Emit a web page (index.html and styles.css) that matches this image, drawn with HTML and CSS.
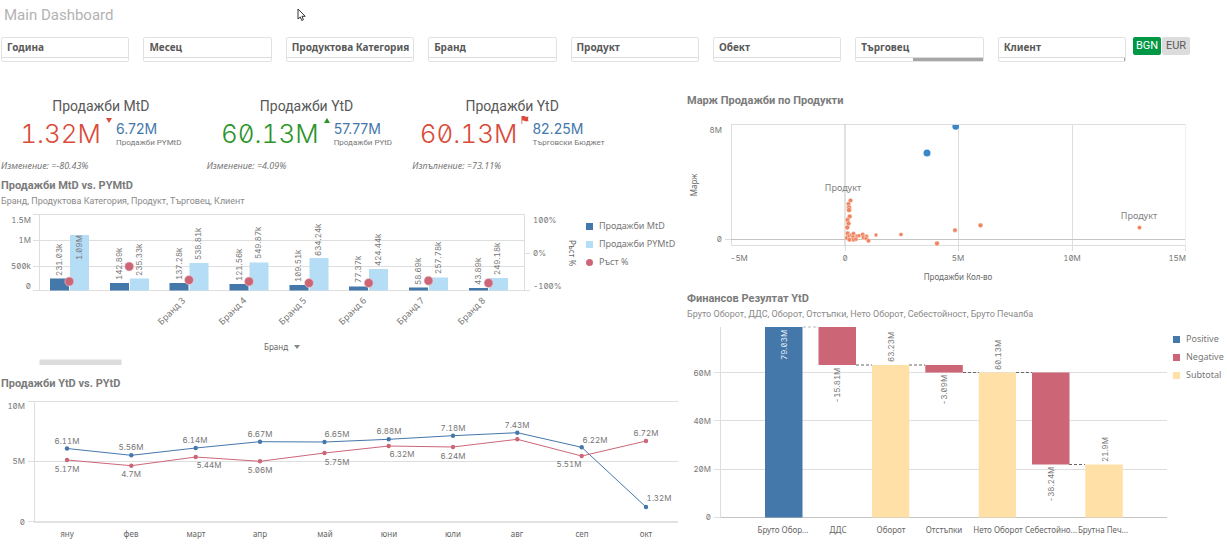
FILE: index.html
```html
<!DOCTYPE html>
<html lang="bg">
<head>
<meta charset="utf-8">
<title>Main Dashboard</title>
<link rel="stylesheet" href="styles.css">
</head>
<body>
<header class="topbar">
  <h1 class="page-title">Main Dashboard</h1>
  <svg class="pointer" width="10" height="14" viewBox="0 0 10 14" aria-hidden="true"><path d="M1 1v10l2.300-2 1.500 3.500 1.600-.8L5 8.300h3.200z" fill="#fff" stroke="#333" stroke-width="1"/></svg>
</header>

<nav class="filters">
  <button class="filter" type="button"><span class="filter-name">Година</span><span class="filter-bar"></span></button>
  <button class="filter" type="button"><span class="filter-name">Месец</span><span class="filter-bar"></span></button>
  <button class="filter" type="button"><span class="filter-name">Продуктова Категория</span><span class="filter-bar"></span></button>
  <button class="filter" type="button"><span class="filter-name">Бранд</span><span class="filter-bar"></span></button>
  <button class="filter" type="button"><span class="filter-name">Продукт</span><span class="filter-bar"></span></button>
  <button class="filter" type="button"><span class="filter-name">Обект</span><span class="filter-bar"></span></button>
  <button class="filter" type="button"><span class="filter-name">Търговец</span><span class="filter-bar"><span class="filter-fill" style="width:55%"></span></span></button>
  <button class="filter" type="button"><span class="filter-name">Клиент</span><span class="filter-bar"><span class="filter-fill" style="width:1%"></span></span></button>
  <div class="currency">
    <button class="cur cur-on" type="button">BGN</button>
    <button class="cur" type="button">EUR</button>
  </div>
</nav>

<main class="board">
  <div class="column">
    <section class="kpis">
      <article class="kpi">
        <h2 class="kpi-title">Продажби MtD</h2>
        <div class="kpi-row">
          <span class="kpi-value red">1.32M</span>
          <svg class="kpi-mark" width="8" height="8" viewBox="0 0 8 8"><path d="M1 2h6L4 7z" fill="#d94b3a"/></svg>
          <div class="kpi-side"><span class="kpi-second">6.72M</span><span class="kpi-label">Продажби PYMtD</span></div>
        </div>
        <p class="kpi-note">Изменение: =-80.43%</p>
      </article>
      <article class="kpi">
        <h2 class="kpi-title">Продажби YtD</h2>
        <div class="kpi-row">
          <span class="kpi-value green">60.13M</span>
          <svg class="kpi-mark" width="8" height="8" viewBox="0 0 8 8"><path d="M1 7h6L4 2z" fill="#2b942b"/></svg>
          <div class="kpi-side"><span class="kpi-second">57.77M</span><span class="kpi-label">Продажби PYtD</span></div>
        </div>
        <p class="kpi-note">Изменение: =4.09%</p>
      </article>
      <article class="kpi">
        <h2 class="kpi-title">Продажби YtD</h2>
        <div class="kpi-row">
          <span class="kpi-value red">60.13M</span>
          <svg class="kpi-mark" width="8" height="8" viewBox="0 0 8 8"><path d="M0.500 0h3l1 .7H7.500L7 3l.5 2.300H4L3 4.600H1.200V8H.5z" fill="#d94b3a"/></svg>
          <div class="kpi-side"><span class="kpi-second">82.25M</span><span class="kpi-label">Търговски Бюджет</span></div>
        </div>
        <p class="kpi-note">Изпълнение: =73.11%</p>
      </article>
    </section>

    <section class="panel">
      <h2 class="panel-title">Продажби MtD vs. PYMtD</h2>
      <p class="panel-sub">Бранд, Продуктова Категория, Продукт, Търговец, Клиент</p>
      <div class="with-legend bars-panel">
        <svg class="chart" viewBox="0 208 583 168" role="img" aria-label="Продажби MtD vs. PYMtD">
          <path class="grid" d="M33 214.500H525M33 240.500H525M33 266.500H525M33 290.500H525M39.500 214V291M524.500 214V291M524 253.500h6M524 290.500h6"/>
          <g class="axis end"><text x="31" y="223">1.5M</text><text x="31" y="243">1M</text><text x="31" y="269">500k</text><text x="31" y="289">0</text></g>
          <g class="axis"><text x="533" y="223">100%</text><text x="533" y="256">0%</text><text x="533" y="289">-100%</text></g>
          <g fill="#4477aa">
            <rect x="50" y="278.500" width="19" height="12"/><rect x="110" y="283" width="19" height="7.500"/><rect x="169.500" y="283" width="19" height="7.500"/><rect x="229.500" y="284" width="19" height="6.500"/><rect x="289.500" y="285" width="19" height="5.500"/><rect x="349" y="286.500" width="19" height="4"/><rect x="409" y="287.500" width="19" height="3"/><rect x="469" y="288" width="19" height="2.500"/>
          </g>
          <g fill="#b5ddf6">
            <rect x="70" y="235" width="19" height="55.500"/><rect x="130" y="278.500" width="19" height="12"/><rect x="189.500" y="263" width="19" height="27.500"/><rect x="249.500" y="262.500" width="19" height="28"/><rect x="309.500" y="258" width="19" height="32.500"/><rect x="369" y="269" width="19" height="21.500"/><rect x="429" y="277.500" width="19" height="13"/><rect x="489" y="278" width="19" height="12.500"/>
          </g>
          <g class="num">
            <text transform="translate(62 276) rotate(-90)">231.03k</text><text transform="translate(82 260) rotate(-90)">1.09M</text>
            <text transform="translate(122 280) rotate(-90)">142.89k</text><text transform="translate(142 276) rotate(-90)">235.33k</text>
            <text transform="translate(182 280) rotate(-90)">137.28k</text><text transform="translate(201 260) rotate(-90)">538.81k</text>
            <text transform="translate(242 281) rotate(-90)">121.56k</text><text transform="translate(261 259) rotate(-90)">549.87k</text>
            <text transform="translate(301 282) rotate(-90)">109.51k</text><text transform="translate(321 256) rotate(-90)">634.24k</text>
            <text transform="translate(361 283) rotate(-90)">77.37k</text><text transform="translate(381 266) rotate(-90)">424.44k</text>
            <text transform="translate(421 285) rotate(-90)">58.69k</text><text transform="translate(441 274) rotate(-90)">257.78k</text>
            <text transform="translate(481 285) rotate(-90)">43.89k</text><text transform="translate(500 275) rotate(-90)">249.18k</text>
          </g>
          <g fill="#cc6677" stroke="#f0d0d5" stroke-width=".6">
            <circle cx="69.300" cy="281.500" r="4.500"/><circle cx="129.200" cy="266.500" r="4.500"/><circle cx="189" cy="280" r="4.500"/><circle cx="249" cy="281.500" r="4.500"/><circle cx="309" cy="283" r="4.500"/><circle cx="368.700" cy="283" r="4.500"/><circle cx="428.500" cy="280.700" r="4.500"/><circle cx="488.500" cy="283" r="4.500"/>
          </g>
          <g class="tilt">
            <text transform="translate(186 301) rotate(-45)">Бранд 3</text><text transform="translate(247 301) rotate(-45)">Бранд 4</text><text transform="translate(307 301) rotate(-45)">Бранд 5</text><text transform="translate(367 301) rotate(-45)">Бранд 6</text><text transform="translate(425 301) rotate(-45)">Бранд 7</text><text transform="translate(486 301) rotate(-45)">Бранд 8</text>
          </g>
          <text class="axis-title" x="276" y="350">Бранд</text>
          <path d="M294 345h6l-3 4z" fill="#888"/>
          <rect x="39.500" y="359.500" width="82" height="5.500" fill="#dcdcdc"/>
          <text class="axis-title" transform="translate(569 253) rotate(90)">Ръст %</text>
        </svg>
        <ul class="legend">
          <li><i class="key blue"></i>Продажби MtD</li>
          <li><i class="key sky"></i>Продажби PYMtD</li>
          <li><i class="key dot rose"></i>Ръст %</li>
        </ul>
      </div>
    </section>

    <section class="panel">
      <h2 class="panel-title">Продажби YtD vs. PYtD</h2>
      <svg class="chart" viewBox="0 392 680 150" role="img" aria-label="Продажби YtD vs. PYtD">
        <path class="grid" d="M28 401.500H678M28 461.500H678M34.500 401V522M28 521.500h6"/><path class="base" d="M34 522H678"/>
        <g class="axis end"><text x="25" y="409">10M</text><text x="25" y="464">5M</text><text x="25" y="525">0</text></g>
        <g fill="none"><path stroke="#4477aa" d="M67 448.500 131.300 455.300 195.700 448 260 441.700 324.500 442 388.700 439.300 453 435.700 517.300 432.700 581.700 447.300 646 507"/><path stroke="#cc6677" d="M67 460 131.300 465.700 195.700 457 260 461.300 324.500 453 388.700 446 453 447 517.300 439.300 581.700 456 646 441"/></g>
        <g fill="#4477aa"><circle cx="67" cy="448.500" r="2.200"/><circle cx="131.300" cy="455.300" r="2.200"/><circle cx="195.700" cy="448" r="2.200"/><circle cx="260" cy="441.700" r="2.200"/><circle cx="324.500" cy="442" r="2.200"/><circle cx="388.700" cy="439.300" r="2.200"/><circle cx="453" cy="435.700" r="2.200"/><circle cx="517.300" cy="432.700" r="2.200"/><circle cx="581.700" cy="447.300" r="2.200"/><circle cx="646" cy="507" r="2.200"/></g>
        <g fill="#cc6677"><circle cx="67" cy="460" r="2.200"/><circle cx="131.300" cy="465.700" r="2.200"/><circle cx="195.700" cy="457" r="2.200"/><circle cx="260" cy="461.300" r="2.200"/><circle cx="324.500" cy="453" r="2.200"/><circle cx="388.700" cy="446" r="2.200"/><circle cx="453" cy="447" r="2.200"/><circle cx="517.300" cy="439.300" r="2.200"/><circle cx="581.700" cy="456" r="2.200"/><circle cx="646" cy="441" r="2.200"/></g>
        <g class="num mid"><text x="67" y="444">6.11M</text><text x="131" y="450">5.56M</text><text x="195" y="443">6.14M</text><text x="260" y="437">6.67M</text><text x="337" y="437">6.65M</text><text x="389" y="434">6.88M</text><text x="453" y="431">7.18M</text><text x="517" y="428">7.43M</text><text x="595" y="443">6.22M</text><text x="646" y="436">6.72M</text><text x="659" y="501">1.32M</text>
        <text x="67" y="472">5.17M</text><text x="131" y="477">4.7M</text><text x="209" y="468">5.44M</text><text x="260" y="473">5.06M</text><text x="337" y="465">5.75M</text><text x="402" y="457">6.32M</text><text x="453" y="459">6.24M</text><text x="569" y="467">5.51M</text></g>
        <g class="cat"><text x="67" y="537">яну</text><text x="131" y="537">фев</text><text x="196" y="537">март</text><text x="260" y="537">апр</text><text x="325" y="537">май</text><text x="389" y="537">юни</text><text x="453" y="537">юли</text><text x="517" y="537">авг</text><text x="582" y="537">сеп</text><text x="646" y="537">окт</text></g>
      </svg>
    </section>
  </div>

  <div class="column">
    <section class="panel scatter-panel">
      <h2 class="panel-title">Марж Продажби по Продукти</h2>
      <svg class="chart" viewBox="686 109 541 182" role="img" aria-label="Марж Продажби по Продукти">
        <path class="grid" d="M731 124.500H1185.500M731 245.500H1185.500M731.500 124V246M958.500 124V251M1072.500 124V251M845.500 246v5M1185.500 246v5M725 239.500h6"/>
        <path class="base" d="M731 239.500H1185.500M845 124V246"/><path d="M1185.500 124V246" stroke="#f0f0f0"/>
        <g class="axis end"><text x="722" y="133">8M</text><text x="722" y="242">0</text><text x="1186" y="261">15M</text></g>
        <g class="axis mid"><text x="739" y="261">-5M</text><text x="845" y="261">0</text><text x="958" y="261">5M</text><text x="1072" y="261">10M</text></g>
        <g fill="#3a87c8"><path d="M952.600 125h6.200a3.400 3.400 0 1 1-6.200 0z"/><circle cx="927" cy="153" r="3.500"/></g>
        <g fill="#ee8560" stroke="#fff" stroke-width=".4"><circle cx="850.500" cy="200.500" r="2.300"/><circle cx="848.500" cy="204" r="2.300"/><circle cx="849" cy="207.500" r="2.500"/><circle cx="849" cy="210" r="2.500"/><circle cx="849.700" cy="216.500" r="2.400"/><circle cx="847.500" cy="220" r="2.400"/><circle cx="848.500" cy="223.500" r="2.400"/><circle cx="847.300" cy="227.500" r="2.400"/><circle cx="847.700" cy="233.500" r="2.400"/><circle cx="847" cy="238" r="2.400"/><circle cx="849" cy="236" r="2"/><circle cx="851.500" cy="235" r="2"/><circle cx="853.500" cy="233.700" r="2.200"/><circle cx="853" cy="237" r="2.200"/><circle cx="849.500" cy="239.700" r="2.200"/><circle cx="853.500" cy="239.700" r="2.200"/><circle cx="856" cy="239" r="2.200"/><circle cx="857" cy="236" r="2"/><circle cx="859" cy="235.700" r="2"/><circle cx="862.700" cy="234.500" r="2.200"/><circle cx="863.500" cy="237.500" r="2.200"/><circle cx="866.500" cy="236.500" r="2.200"/><circle cx="866" cy="238.500" r="2"/><circle cx="868.500" cy="240.700" r="2.200"/><circle cx="876" cy="235" r="1.900"/><circle cx="901" cy="234.500" r="2.100"/><circle cx="937" cy="243.500" r="2.400"/><circle cx="955" cy="230.200" r="2.200"/><circle cx="980.500" cy="225.300" r="2.400"/><circle cx="1139.500" cy="227.600" r="2.200"/></g>
        <g class="point mid"><text x="843" y="191">Продукт</text><text x="1139" y="219">Продукт</text></g>
        <text class="axis-title" x="958" y="280">Продажби Кол-во</text>
        <text class="axis-title" transform="translate(697 185) rotate(-90)">Марж</text>
      </svg>
    </section>

    <section class="panel">
      <h2 class="panel-title">Финансов Резултат YtD</h2>
      <p class="panel-sub">Бруто Оборот, ДДС, Оборот, Отстъпки, Нето Оборот, Себестойност, Бруто Печалба</p>
      <div class="with-legend">
        <svg class="chart" viewBox="686 321 484 217" role="img" aria-label="Финансов Резултат YtD">
          <path class="grid" d="M714 372.500H1167M714 420.500H1167M714 469.500H1167M714 517.500H720M720.500 327V518"/><path class="base" d="M721 517.500H1167"/>
          <g class="axis end"><text x="711" y="376">60M</text><text x="711" y="424">40M</text><text x="711" y="472">20M</text><text x="711" y="520">0</text></g>
          <path d="M803 327H818" stroke="#bbb" stroke-dasharray="3 2"/>
          <path d="M856 365H872M909 365H925M963 372.500H979M1016 372.500H1032M1069 464.500H1085" stroke="#666" stroke-dasharray="3 2"/>
          <rect x="765" y="327" width="37.500" height="190.500" fill="#4477aa"/>
          <g fill="#cc6677"><rect x="818.500" y="327" width="37.500" height="38"/><rect x="925.300" y="365" width="37.500" height="7.500"/><rect x="1032" y="372.500" width="37.500" height="92"/></g>
          <g fill="#ffe1a8"><rect x="872" y="365" width="37.300" height="152.500"/><rect x="978.700" y="372.500" width="37.300" height="145"/><rect x="1085.300" y="464.500" width="37.500" height="53"/></g>
          <g class="num"><text class="light" transform="translate(787 360) rotate(-90)">79.03M</text><text transform="translate(840 403) rotate(-90)">-15.81M</text><text transform="translate(894 362) rotate(-90)">63.23M</text><text transform="translate(947 405) rotate(-90)">-3.09M</text><text transform="translate(1001 370) rotate(-90)">60.13M</text><text transform="translate(1054 502) rotate(-90)">-38.24M</text><text transform="translate(1108 462) rotate(-90)">21.9M</text></g>
          <g class="cat"><text x="783" y="533">Бруто Обор...</text><text x="838" y="533">ДДС</text><text x="891" y="533">Оборот</text><text x="944" y="533">Отстъпки</text><text x="998" y="533">Нето Оборот</text><text x="1051" y="533">Себестойно...</text><text x="1103" y="533">Брутна Печ...</text></g>
        </svg>
        <ul class="legend">
          <li><i class="key blue"></i>Positive</li>
          <li><i class="key rose"></i>Negative</li>
          <li><i class="key sand"></i>Subtotal</li>
        </ul>
      </div>
    </section>
  </div>
</main>
</body>
</html>
```
FILE: styles.css
```css
* { box-sizing: border-box; margin: 0; }
body { background: #fff; color: #595959; font-family: "Noto Sans", sans-serif; font-size: 9px; }
h1, h2 { font-weight: 400; }
.topbar { position: relative; height: 37px; padding: 4px; }
.page-title { font: 15px/22px Roboto, sans-serif; color: #b3b3b3; }
.pointer { position: absolute; left: 297px; top: 8px; }

.filters { display: grid; grid-template-columns: repeat(8, 1fr) auto; column-gap: 14px; padding: 0 37px 0 1px; }
.filter { height: 25px; padding: 0; border: 1px solid #e2e2e2; border-radius: 2px; background: #fff; display: flex; flex-direction: column; font: inherit; text-align: left; color: #595959; }
.filter-name { flex: 1; padding-left: 5px; font-size: 10px; line-height: 19px; font-weight: 700; white-space: nowrap; }
.filter-bar { display: flex; justify-content: flex-end; width: 100%; height: 4px; border-top: 1px solid #dcdcdc; }
.filter-fill { background: #a6a6a6; }
.currency { display: flex; gap: 1px; margin-left: -7px; align-items: flex-start; }
.cur { width: 28px; height: 18px; padding: 0; border: 0; border-radius: 2px; background: #dcdcdc; color: #595959; font: 11px/18px Roboto, sans-serif; }
.cur-on { background: #009845; color: #fff; }

.board { display: grid; grid-template-columns: 680fr 541fr; column-gap: 6px; }
.column { min-width: 0; padding-top: 31px; }
.kpis { display: grid; grid-template-columns: repeat(3, 1fr); padding: 4px 62px 0 1px; margin-bottom: 5px; }
.kpi { min-width: 0; white-space: nowrap; }
.kpi-title { padding-right: 6px; text-align: center; font: 14px/18px Roboto, sans-serif; }
.kpi-row { display: flex; justify-content: center; height: 38px; padding: 1px 6px 0 0; }
.kpi-value { font: 300 26px/36px Inter, sans-serif; font-feature-settings: "zero", "tnum"; }
.kpi-mark { margin: 0 3px 0 4px; }
.kpi-side { display: flex; flex-direction: column; padding-top: 5px; }
.kpi-second { font: 14px/16px Inter, sans-serif; color: #4477aa; }
.kpi-label { font: 8px/12px Roboto, sans-serif; color: #777; }
.kpi-note { padding-top: 6px; font-size: 9px; line-height: 14px; font-style: italic; color: #777; }
.red { color: #d94b3a; }
.green { color: #2b942b; }

.panel-title { padding-left: 1px; font: 700 11px/16px Roboto, sans-serif; color: #7b7b7b; white-space: nowrap; }
.panel-sub { padding-left: 1px; font: 9px/14px Roboto, sans-serif; color: #8a8a8a; white-space: nowrap; }
.chart { display: block; width: 100%; height: auto; }
.with-legend { display: grid; grid-template-columns: 484fr 57fr; }
.bars-panel { grid-template-columns: 583fr 97fr; }
.legend { list-style: none; padding: 9px 0 0 3px; font-size: 9px; line-height: 18px; color: #777; white-space: nowrap; }
.legend li { display: flex; align-items: center; gap: 6px; }
.key { width: 7px; height: 7px; flex: none; }
.dot { border-radius: 50%; }
.blue { background: #4477aa; }
.sky { background: #b5ddf6; }
.rose { background: #cc6677; }
.sand { background: #ffe1a8; }

.grid { fill: none; stroke: #dedede; }
.base { fill: none; stroke: #c4c4c4; }
.axis, .num { font: 8px Inter, sans-serif; font-feature-settings: "zero", "tnum"; fill: #777; }
.end { text-anchor: end; }
.mid, .cat, .axis-title { text-anchor: middle; }
.cat, .axis-title { font-size: 8px; fill: #666; }
.point { font-size: 9px; fill: #808080; }
.tilt { font-size: 9px; fill: #777; text-anchor: end; }
.num .light { fill: #e8eef5; }
```
